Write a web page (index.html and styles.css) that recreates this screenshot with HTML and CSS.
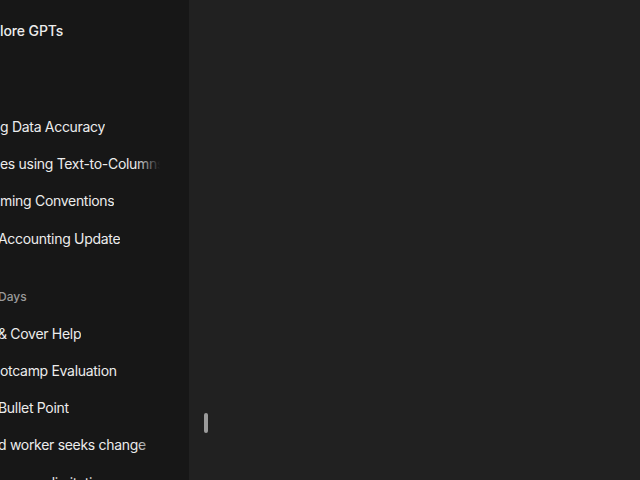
FILE: index.html
```html
<!DOCTYPE html>
<html lang="en">
<head>
<meta charset="utf-8">
<title>ChatGPT</title>
<link rel="stylesheet" href="styles.css">
</head>
<body>
<div class="app">
  <aside class="sidebar">
    <nav class="nav">
      <a class="item item-gpts" href="#"><span class="label">lore GPTs</span></a>
      <section class="group">
        <h3 class="group-title"></h3>
        <ol class="list">
          <li><a class="item" href="#"><span class="label">g Data Accuracy</span><span class="fade"></span></a></li>
          <li><a class="item" href="#"><span class="label">es using Text-to-Columns</span><span class="fade"></span></a></li>
          <li><a class="item" href="#"><span class="label">ming Conventions</span><span class="fade"></span></a></li>
          <li><a class="item" href="#"><span class="label cut">Accounting Update</span><span class="fade"></span></a></li>
        </ol>
      </section>
      <section class="group">
        <h3 class="group-title"><span class="cut">Days</span></h3>
        <ol class="list">
          <li><a class="item" href="#"><span class="label cut">&amp; Cover Help</span><span class="fade"></span></a></li>
          <li><a class="item" href="#"><span class="label">otcamp Evaluation</span><span class="fade"></span></a></li>
          <li><a class="item" href="#"><span class="label cut">Bullet Point</span><span class="fade"></span></a></li>
          <li><a class="item" href="#"><span class="label cut">d worker seeks change</span><span class="fade"></span></a></li>
          <li><a class="item" href="#"><span class="label">ery row limitations</span><span class="fade"></span></a></li>
        </ol>
      </section>
    </nav>
  </aside>
  <main class="main">
    <div class="handle"></div>
  </main>
</div>
</body>
</html>
```
FILE: styles.css
```css
* { box-sizing: border-box; }
html, body { margin: 0; padding: 0; height: 100%; }
body {
  background: #212121;
  font-family: Inter, "Noto Sans", "Liberation Sans", sans-serif;
  color: #ececec;
  overflow: hidden;
}
.app {
  display: flex;
  height: 480px;
}
.sidebar {
  width: 189px;
  flex: none;
  background: #171717;
  overflow: hidden;
}
.nav {
  width: 168px;
  padding-top: 10px;
  display: flex;
  flex-direction: column;
}
.item {
  position: relative;
  display: flex;
  align-items: center;
  height: 37.2px;
  padding: 0;
  color: #ececec;
  text-decoration: none;
  font-size: 14px;
  letter-spacing: -0.3px;
  white-space: nowrap;
  overflow: hidden;
}
.item-gpts {
  height: 40px;
  font-weight: 500;
  letter-spacing: -0.1px;
}
.label {
  overflow: hidden;
  margin-left: 0;
}
.cut { margin-left: -2px; }
.fade {
  position: absolute;
  top: 0;
  right: 0;
  bottom: 0;
  width: 32px;
  background: linear-gradient(to right, rgba(23,23,23,0) 0%, #171717 75%);
}
.group { margin-top: 22px; }
.group-title {
  margin: 0;
  height: 36px;
  display: flex;
  align-items: center;
  font-size: 12px;
  font-weight: 500;
  color: #9a9a9a;
  white-space: nowrap;
}
.list { list-style: none; margin: 0; padding: 0; }
.main {
  flex: 1;
  position: relative;
  background: #212121;
}
.handle {
  position: absolute;
  left: 15px;
  top: 413px;
  width: 4px;
  height: 20px;
  border-radius: 2px;
  background: #9b9b9b;
}
```
